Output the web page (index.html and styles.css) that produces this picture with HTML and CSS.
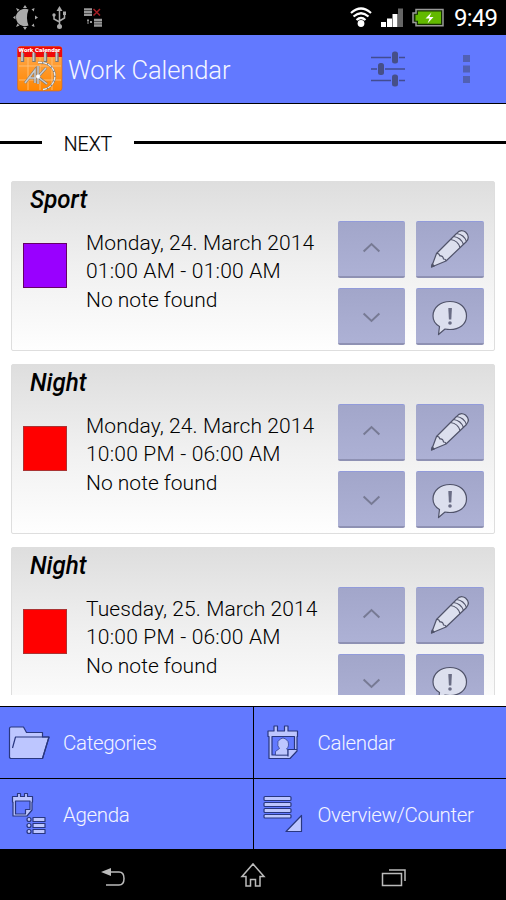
FILE: index.html
```html
<!DOCTYPE html>
<html lang="en">
<head>
<meta charset="utf-8">
<title>Work Calendar</title>
<link rel="stylesheet" href="styles.css">
</head>
<body>
<svg class="symbols" aria-hidden="true">
  <symbol id="up" viewBox="0 0 68 57"><path d="M26 30.500l8-7.500 8 7.500" fill="none" stroke="#777a94" stroke-width="2"/></symbol>
  <symbol id="down" viewBox="0 0 68 57"><path d="M26 25.500l8 7.500 8-7.500" fill="none" stroke="#777a94" stroke-width="2"/></symbol>
  <symbol id="pencil" viewBox="0 0 68 57">
    <g fill="#dcdfee" stroke="#50536a" stroke-width="1.200" stroke-linejoin="round">
      <path d="M15.500 46L20.500 32.500 40.500 12.500Q44.500 7.500 49.500 11Q54.500 15.500 50.500 20.500L30 40Z"/>
      <path d="M20.500 32.500Q23 32 24 35Q27 34.500 27.500 38Q30 38 30 40M34.500 18.500Q42 19.500 44 26.500M37.500 15.500Q45 16.500 47.500 23.500M40.500 12.500Q48 13.500 50.500 20.500" fill="none"/>
      <path d="M15.500 46l.7-3 2 2z" fill="#50536a"/>
    </g>
  </symbol>
  <symbol id="note" viewBox="0 0 68 57">
    <path d="M23.500 38.500C19 36 17 32 17 28C17 19.500 24.500 13.500 34 13.500S50.500 19.500 50.500 28S43 41.500 34 41.500Q31.500 41.500 29 41L22.500 46.500Z" fill="#dcdfee" stroke="#50536a" stroke-width="1.200" stroke-linejoin="round"/>
    <path d="M32.300 20h3.600l-.6 11.500h-2.400z" fill="#696c84"/><circle cx="34" cy="35" r="1.800" fill="#696c84"/>
  </symbol>
</svg>
<div class="screen">
  <div class="status">
    <svg width="506" height="35" viewBox="0 0 506 35">
      <g fill="#aaa"><path d="M28.500 9.500Q25.500 17.500 28.500 25.500Q25.500 26.700 23 26Q16 24 16 17.500T23 9Q26 8.400 28.500 9.500Z"/><path d="M25 5l2 3h-4zM25 30l2-3h-4zM13 17.500l2.500-2v4zM38 17.500l-3-2v4zM16 8l3.500 1.500-2 2zM16 27l3.500-1.500-2-2zM34.500 8l-.7 3.500-2.300-2.300zM34.500 27l-.7-3.500-2.300 2.300z"/></g>
      <g stroke="#aaa" stroke-width="1.500" fill="none"><path d="M59.500 10v16M54 15v4l5.500 3M64.500 13v5l-5 3"/></g><g fill="#aaa"><path d="M59.500 6l3 5h-6z"/><circle cx="59.500" cy="26.500" r="2.500"/><circle cx="54" cy="15" r="1.700"/><path d="M63 11.500h3v3.500h-3z"/></g>
      <path d="M84 9.300h8M84 12.100h8M84 14.900h8M94 19.900h8M94 22.700h8M94 25.500h8" stroke="#999" stroke-width="2.300"/><path d="M93.500 9l6.500 6.500M100 9l-6.500 6.500" stroke="#a51d23" stroke-width="1.500"/><path d="M87 19.500h2v2h-2zM90 21h2v2h-2zM87 22.500h2v1h-2z" fill="#999"/>
      <g fill="none" stroke="#fff" stroke-width="2.200"><path d="M351 13q10-9 20 0M353.500 16.500q7.500-6.500 15 0M356.500 20q4.500-4 9 0"/></g><circle cx="361" cy="23.500" r="3.400" fill="#fff"/>
      <path d="M381 22h5v5h-5zM387 18.500h5V27h-5zM392.500 14h5v13h-5z" fill="#fff"/><path d="M398 8.500h5V27h-5z" fill="#666"/>
      <path d="M416 9.500h27v16.200h-27v-3.200h-3v-9.500h3z" fill="#163000" stroke="#999" stroke-width="1.500"/><path d="M418 11.500h23v12.200h-23v-3h-2.500v-6h2.500z" fill="#62b900"/><path d="M431.500 12.500l-6 6h4l-2 5 6-6.500h-4z" fill="#fff"/>
    </svg>
    <span class="clock">9:49</span>
  </div>
  <header>
    <svg class="app-icon" width="46" height="46" viewBox="0 0 46 46">
      <defs><linearGradient id="orange" x2="0" y2="1"><stop stop-color="#ffad55"/><stop offset="1" stop-color="#ff8500"/></linearGradient></defs>
      <rect x=".5" y=".5" width="44.500" height="44.500" rx="3" fill="url(#orange)" stroke="#c86b34" stroke-width=".7"/>
      <path d="M2 20h42M2 34h42M11 12v32M23 12v32M35 12v32" stroke="#ffc27a" stroke-width=".9"/>
      <path d="M.5 11V3q0-2.500 3-2.500h38.500q3 0 3 2.500v8z" fill="#f00808"/>
      <path d="M5.500 7v9M17 7v9M28.500 7v9M40 7v9" stroke="#777" stroke-width="3.400"/><path d="M5 6v9M16.500 6v9M28 6v9M39.500 6v9" stroke="#ccc" stroke-width="1.700"/>
      <text x="1.500" y="6.200" class="icon-caption" textLength="42" lengthAdjust="spacingAndGlyphs">Work Calendar</text>
      <path d="M21 16.500C42 15 43 41 26 43.500" fill="none" stroke="#777" stroke-width="2"/><path d="M21 16.500C42 15 43 41 26 43.500" fill="none" stroke="#eee" stroke-width="1.300" stroke-dasharray="4 1"/>
      <path d="M8 37L18 24v13M12 32h7M21 20v18M29 22L21 31l9 7" fill="none" stroke="#777" stroke-width="2.600"/><path d="M8 37L18 24v13M12 32h7M21 20v18M29 22L21 31l9 7" fill="none" stroke="#ccc" stroke-width="1.500"/><circle cx="21" cy="30.500" r="2" fill="#fff"/>
    </svg>
    <h1>Work Calendar</h1>
    <svg class="tools" width="136" height="68" viewBox="0 0 136 68"><path d="M1 22.500h20M29 22.500h6M1 34h6M15 34h20M1 45.500h20M29 45.500h6" stroke="#424c91" stroke-width="1.500"/><g fill="#464f88"><rect x="22" y="16.500" width="6" height="12" rx="2.500"/><rect x="8" y="28" width="6" height="12" rx="2.500"/><rect x="22" y="39.500" width="6" height="12" rx="2.500"/></g><path d="M93 20h7v7h-7zM93 30.500h7v7h-7zM93 41h7v7h-7z" fill="#5160b3"/></svg>
  </header>
  <main>
    <div class="section"><i class="rule short"></i><span>NEXT</span><i class="rule"></i></div>
    <article class="card">
      <h2>Sport</h2>
      <div class="swatch purple"></div>
      <div class="details"><p class="l1">Monday, 24. March 2014</p><p class="l2">01:00 AM - 01:00 AM</p><p class="l3">No note found</p></div>
      <div class="buttons"><button><svg><use href="#up"/></svg></button><button><svg><use href="#pencil"/></svg></button><button><svg><use href="#down"/></svg></button><button><svg><use href="#note"/></svg></button></div>
    </article>
    <article class="card">
      <h2>Night</h2>
      <div class="swatch red"></div>
      <div class="details"><p class="l1">Monday, 24. March 2014</p><p class="l2">10:00 PM - 06:00 AM</p><p class="l3">No note found</p></div>
      <div class="buttons"><button><svg><use href="#up"/></svg></button><button><svg><use href="#pencil"/></svg></button><button><svg><use href="#down"/></svg></button><button><svg><use href="#note"/></svg></button></div>
    </article>
    <article class="card">
      <h2>Night</h2>
      <div class="swatch red"></div>
      <div class="details"><p class="l1">Tuesday, 25. March 2014</p><p class="l2">10:00 PM - 06:00 AM</p><p class="l3">No note found</p></div>
      <div class="buttons"><button><svg><use href="#up"/></svg></button><button><svg><use href="#pencil"/></svg></button><button><svg><use href="#down"/></svg></button><button><svg><use href="#note"/></svg></button></div>
    </article>
  </main>
  <nav class="menu">
    <a><svg viewBox="0 0 63 71"><g class="ink"><path d="M9.500 50.500V21.500Q9.500 20 11 20h12.500l3 5.500H42.500v4.500H49L42.500 51.500H10.500Z"/><path d="M12.500 41L15.500 30H49L42.500 51.500H10" fill="none"/></g></svg><span>Categories</span></a>
    <a><svg viewBox="0 0 63 71"><g class="ink"><path d="M14 24h6v-5h3.500v5h7v-5H34v5h9.500v5.500h-.5V44L36 51.500H15V29.500h-1z"/><path d="M18 29.500h22.500V42.500H35l-1 5.500H18z" fill="#6279ff"/><path d="M21.500 48v-3.500l4-3q-2.500-2-1.500-7 5-7 10 0 1.500 5-1.500 7.500l1.500 1v5z" stroke-width=".7"/><path d="M34 49.500v-7h9"/></g></svg><span>Calendar</span></a>
    <a><svg viewBox="0 0 63 71"><g class="ink"><path d="M12.500 17.500h5v-3h3v3h4v-3h3v3h5v5.500h-.5V31l-5 6h-14V23h-.5z"/><path d="M15.500 22H30v8.500h-4.500v4.500h-10z" fill="#6279ff"/><rect x="33" y="38.500" width="12" height="4"/><rect x="33" y="44.500" width="12" height="4"/><rect x="33" y="50.500" width="12" height="4"/><circle cx="29" cy="40.500" r="2"/><circle cx="29" cy="46.500" r="2"/><circle cx="29" cy="52.500" r="2"/></g></svg><span>Agenda</span></a>
    <a><svg viewBox="0 0 63 71"><g class="ink"><rect x="10" y="17.500" width="27" height="4" rx="1"/><rect x="10" y="23.500" width="27" height="4" rx="1"/><rect x="10" y="29.500" width="27" height="4" rx="1"/><rect x="10" y="35.500" width="27" height="3.500" rx="1"/><path d="M32 52.500L47.500 36.500v16z"/></g></svg><span>Overview/Counter</span></a>
  </nav>
  <footer><svg width="506" height="51" viewBox="0 0 506 51"><g fill="none" stroke="#bbb" stroke-width="1.500"><path d="M108 23h11q5 0 5 6.500t-5 6.500h-13M242 27.500L253 15l11 12.500h-4V37h-4.500v-6.500h-5V37H246v-9.500zM382.500 24.500h19v12h-19zM389 21h16v11"/></g><path d="M101 23l10-4v8z" fill="#bbb"/></svg></footer>
</div>
</body>
</html>
```
FILE: styles.css
```css
* { box-sizing: border-box; }
body { margin: 0; background: #000; font-family: Roboto, sans-serif; font-weight: 300; }
h1, h2, p { margin: 0; white-space: nowrap; }
svg { display: block; flex: none; }
.symbols { position: absolute; width: 0; height: 0; }
.screen { width: 506px; height: 900px; overflow: hidden; display: flex; flex-direction: column; }
.status { height: 35px; flex: none; position: relative; background: #000; }
.clock { position: absolute; left: 454px; top: 4px; color: #fff; font-size: 24px; line-height: 29px; font-weight: 400; letter-spacing: -.8px; }
header { height: 69px; flex: none; display: flex; align-items: center; background: #6279ff; border-bottom: 1px solid #000; padding-left: 17px; }
.app-icon { margin-right: 5px; }
.icon-caption { fill: #fff; font: 900 6px Roboto, sans-serif; }
h1 { color: #f4f5ff; font-size: 25.500px; font-weight: 300; line-height: 32px; width: 302px; padding-top: 2px; letter-spacing: -.1px; }
main { height: 591px; flex: none; overflow: hidden; background: #fff; }
.section { height: 77px; display: flex; align-items: center; font-size: 19.500px; }
.section span { width: 92px; text-align: center; padding-top: 3px; -webkit-text-stroke: .2px #000; }
.rule { flex: 1; height: 3px; background: #000; }
.rule.short { flex: 0 0 42px; }
.card { height: 170px; margin: 0 11px 13px; border: 1px solid #dedede; border-radius: 2px; background: linear-gradient(#dedede, #f0f0f0 50%, #fefefe); display: grid; grid-template: 39px 129px / 62px 1fr 156px; }
h2 { grid-column: 1 / -1; margin-left: 18px; font-size: 25.500px; line-height: 34px; font-weight: 500; font-style: italic; transform: scaleX(.945); transform-origin: left; }
.swatch { width: 44px; height: 45px; margin: 22px 0 0 11px; border: 1px solid #555; }
.purple { background: #90f; border-color: #606; }
.red { background: #f00; border-color: #a33; }
.details { font-size: 21px; line-height: 28.500px; padding: 8px 0 0 12px; color: #000; }
.l1 { letter-spacing: .1px; }
.l2 { letter-spacing: .2px; }
.l2, .l3 { margin-top: -.2px; }
.buttons { display: grid; grid-template: 57px 57px / 67px 68px; gap: 10px 11px; align-content: start; justify-content: start; }
button { padding: 0; border: 0; border-top: 1px solid #929bda; border-bottom: 2px solid #8e91b3; border-radius: 2px; background: linear-gradient(#a2a6ca, #adb1d5); }
button svg { width: 100%; height: 57px; margin-top: -1px; margin-bottom: -2px; }
.menu { height: 154px; flex: none; background: #000; border-top: 11px solid #fff; padding-top: 1px; display: grid; grid-template: 71px 70px / 253px 252px; gap: 1px; }
.menu a { background: #6279ff; display: flex; align-items: center; overflow: hidden; color: #f4f5ff; font-size: 20.500px; letter-spacing: -.33px; }
.menu svg { width: 63px; height: 71px; }
.menu span { padding-top: 1px; }
.menu a:nth-child(even) span { padding-left: .5px; }
.ink { fill: #bdc6ff; stroke: #29377f; stroke-width: 1.200; stroke-linejoin: round; }
footer { height: 51px; flex: none; background: #000; }
```
